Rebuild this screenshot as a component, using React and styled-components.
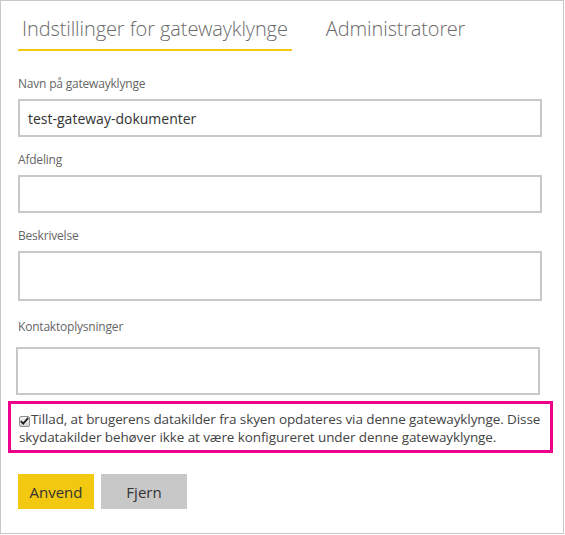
import styled, { createGlobalStyle } from "styled-components";

const GlobalStyle = createGlobalStyle`
  html, body {
    margin: 0;
    padding: 0;
    background: #fff;
  }
  * {
    box-sizing: border-box;
  }
`;

const fields = [
  { label: "Navn på gatewayklynge", value: "test-gateway-dokumenter", height: 38, top: 0, space: 7 },
  { label: "Afdeling", value: "", height: 38, top: 15, space: 7 },
  { label: "Beskrivelse", value: "", height: 50, top: 15, space: 7 },
  { label: "Kontaktoplysninger", value: "", height: 48, top: 18, space: 12, shift: -2 },
];

export default function App() {
  return (
    <>
      <GlobalStyle />
      <Frame>
        <Tabs>
          <Tab $active>Indstillinger for gatewayklynge</Tab>
          <Tab>Administratorer</Tab>
        </Tabs>
        <Form>
          {fields.map((f) => (
            <Field key={f.label} $top={f.top}>
              <Label $space={f.space}>{f.label}</Label>
              <TextInput
                $height={f.height}
                $shift={f.shift || 0}
                defaultValue={f.value}
                readOnly
              />
            </Field>
          ))}
          <Highlight>
            <CheckBox>
              <svg width="9" height="8" viewBox="0 0 9 8">
                <path d="M0.8 4.2 L3.2 6.6 L8.2 0.9" fill="none" stroke="#222" strokeWidth="1.8" />
              </svg>
            </CheckBox>
            Tillad, at brugerens datakilder fra skyen opdateres via denne gatewayklynge. Disse
            skydatakilder behøver ikke at være konfigureret under denne gatewayklynge.
          </Highlight>
          <Buttons>
            <Button $primary>Anvend</Button>
            <Button $width={86}>Fjern</Button>
          </Buttons>
        </Form>
      </Frame>
    </>
  );
}

const Frame = styled.div`
  width: 564px;
  height: 534px;
  border: 1px solid #c8c8c8;
  font-family: "Open Sans", "Noto Sans", sans-serif;
  color: #444;
`;

const Tabs = styled.div`
  display: flex;
  gap: 30px;
  padding: 14px 0 0 17px;
`;

const Tab = styled.div`
  font-family: "Open Sans Light", "Open Sans", "Noto Sans", sans-serif;
  font-size: 20px;
  font-weight: 300;
  line-height: 28px;
  letter-spacing: -0.1px;
  color: #6a6a6a;
  padding: 0 4px 6px;
  border-bottom: 2px solid ${(p) => (p.$active ? "#f2c811" : "transparent")};
`;

const Form = styled.div`
  padding: 25px 21px 0 17px;
`;

const Field = styled.div`
  margin-top: ${(p) => p.$top}px;
`;

const Label = styled.div`
  font-size: 12px;
  line-height: 16px;
  color: #666;
  letter-spacing: -0.2px;
  margin-bottom: ${(p) => p.$space}px;
`;

const TextInput = styled.input`
  display: block;
  width: 100%;
  height: ${(p) => p.$height}px;
  margin-left: ${(p) => p.$shift}px;
  border: 2px solid #c8c8c8;
  padding: 0 8px;
  font-family: inherit;
  font-size: 14px;
  color: #333;
  outline: none;
  background: #fff;
`;

const Highlight = styled.div`
  margin: 6px -11px 0 -10px;
  border: 3px solid #ec008c;
  padding: 6px 8px 4px;
  font-size: 13.5px;
  line-height: 18px;
  letter-spacing: -0.1px;
  color: #444;
`;

const CheckBox = styled.span`
  display: inline-flex;
  align-items: center;
  justify-content: center;
  width: 11px;
  height: 11px;
  margin-right: 1px;
  vertical-align: -1px;
  border: 1px solid #8e8f8f;
  border-radius: 2px;
  background: linear-gradient(#f4f4f4, #d8d8d8);
`;

const Buttons = styled.div`
  display: flex;
  gap: 7px;
  margin-top: 21px;
`;

const Button = styled.button`
  width: ${(p) => p.$width || 76}px;
  height: 35px;
  border: none;
  padding: 0;
  font-family: inherit;
  font-size: 15px;
  color: #333;
  background: ${(p) => (p.$primary ? "#f2c811" : "#c8c8c8")};
`;
